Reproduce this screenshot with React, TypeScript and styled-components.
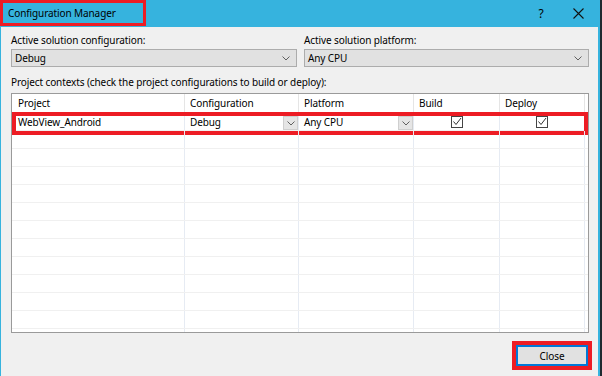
import React from "react";
import styled, { createGlobalStyle } from "styled-components";

const GlobalStyle = createGlobalStyle`
  html, body { margin: 0; padding: 0; background: #f0f0f0; }
  body {
    font-family: "Noto Sans", "Open Sans", sans-serif;
    font-size: 10px;
    letter-spacing: -0.1px;
    color: #000;
  }
  * { box-sizing: border-box; }
`;

const RED = "#ed1c24";

const Window = styled.div`
  width: 602px;
  height: 376px;
  background: #36b3de;
  border-right: 2px solid #1f2a30;
  display: flex;
  flex-direction: column;
  overflow: hidden;
`;

const TitleBar = styled.div`
  position: relative;
  height: 27px;
  flex: 0 0 27px;
  display: flex;
  align-items: center;
  padding-left: 8px;
  padding-right: 2px;
`;

const TitleText = styled.span`
  font-size: 10px;
  color: #000;
  flex: 1;
  line-height: 16px;
  margin-top: -1px;
`;

const TitleHighlight = styled.div`
  position: absolute;
  left: 0;
  top: 0;
  width: 146px;
  height: 26px;
  border: 3px solid ${RED};
  pointer-events: none;
`;

const CaptionButton = styled.div<{ $w: number }>`
  width: ${(p) => p.$w}px;
  height: 27px;
  display: flex;
  align-items: center;
  justify-content: center;
  font-size: 12px;
  color: #000;
`;

const Body = styled.div`
  flex: 1;
  margin: 0 2px 0 1px;
  background: #f0f0f0;
  padding: 6px 9px 0 10px;
  display: flex;
  flex-direction: column;
`;

const TopRow = styled.div`
  display: grid;
  grid-template-columns: 286px 285px;
  column-gap: 7px;
`;

const Field = styled.div`
  display: flex;
  flex-direction: column;
`;

const Label = styled.div`
  line-height: 14px;
  height: 14px;
  white-space: nowrap;
`;

const Combo = styled.div`
  margin-top: 2px;
  height: 18px;
  background: #e1e1e1;
  border: 1px solid #acacac;
  display: flex;
  align-items: center;
  padding-left: 3px;
  padding-right: 6px;
  justify-content: space-between;
`;

const ContextsLabel = styled(Label)`
  margin-top: 8px;
`;

const Grid = styled.div`
  margin-top: 4px;
  height: 240px;
  flex: 0 0 240px;
  background: #fff;
  border: 1px solid #9a9a9a;
  overflow: hidden;
`;

const COLS = "173px 114px 115px 86px 85px 1fr";

const HeaderRow = styled.div`
  display: grid;
  grid-template-columns: ${COLS};
  height: 19px;
  border-bottom: 1px solid #e5e5e5;
`;

const HeaderCell = styled.div<{ $last?: boolean }>`
  display: flex;
  align-items: center;
  padding-left: 5px;
  border-right: ${(p) => (p.$last ? "none" : "1px solid #e5e5e5")};
  &:first-child { padding-left: 6px; }
`;

const Row = styled.div<{ $highlight?: boolean }>`
  position: relative;
  display: grid;
  grid-template-columns: ${COLS};
  height: 18px;
  border-bottom: 1px solid #f0f0f0;
  ${(p) =>
    p.$highlight
      ? `&::after {
          content: "";
          position: absolute;
          left: 0;
          right: 0;
          top: -1px;
          bottom: -5px;
          border: 4px solid ${RED};
          pointer-events: none;
        }`
      : ""}
`;

const Cell = styled.div<{ $last?: boolean; $center?: boolean }>`
  display: flex;
  align-items: center;
  justify-content: ${(p) => (p.$center ? "center" : "flex-start")};
  padding-left: ${(p) => (p.$center ? 0 : 5)}px;
  border-right: ${(p) => (p.$last ? "none" : "1px solid #e6ebf3")};
  &:first-child { padding-left: 6px; }
`;

const ComboCell = styled(Cell)`
  justify-content: space-between;
  padding-right: 0;
`;

const CellDrop = styled.div`
  align-self: flex-end;
  width: 15px;
  height: 14px;
  background: #e5e5e5;
  border: 1px solid #cfcfcf;
  display: flex;
  align-items: center;
  justify-content: center;
`;

const CheckBox = styled.div`
  width: 12px;
  height: 12px;
  margin-top: 1px;
  border: 1px solid #444;
  background: #fff;
  display: flex;
  align-items: center;
  justify-content: center;
`;

const Footer = styled.div`
  display: flex;
  justify-content: flex-end;
  margin-top: 12px;
  padding-right: 1px;
`;

const Button = styled.div`
  width: 72px;
  height: 21px;
  background: #e1e1e1;
  border: 1px solid #0078d7;
  box-shadow: inset 0 0 0 1px #0078d7;
  outline: 4px solid ${RED};
  display: flex;
  align-items: center;
  justify-content: center;
`;

const Chevron = () => (
  <svg width="8" height="5" viewBox="0 0 8 5">
    <path d="M0.5 0.5 L4 4 L7.5 0.5" fill="none" stroke="#606060" strokeWidth="1" />
  </svg>
);

const Check = () => (
  <svg width="10" height="10" viewBox="0 0 10 10">
    <path d="M1.5 4.5 L4 7.5 L9 1" fill="none" stroke="#333" strokeWidth="1" />
  </svg>
);

const CloseIcon = () => (
  <svg width="11" height="11" viewBox="0 0 11 11">
    <path d="M0.5 0.5 L10.5 10.5 M10.5 0.5 L0.5 10.5" stroke="#111" strokeWidth="1.1" />
  </svg>
);

export default function App() {
  const emptyRows = Array.from({ length: 12 });
  return (
    <>
      <GlobalStyle />
      <Window>
        <TitleBar>
          <TitleText>Configuration Manager</TitleText>
          <CaptionButton $w={34}>?</CaptionButton>
          <CaptionButton $w={40}>
            <CloseIcon />
          </CaptionButton>
          <TitleHighlight />
        </TitleBar>
        <Body>
          <TopRow>
            <Field>
              <Label>Active solution configuration:</Label>
              <Combo>
                <span>Debug</span>
                <Chevron />
              </Combo>
            </Field>
            <Field>
              <Label>Active solution platform:</Label>
              <Combo>
                <span>Any CPU</span>
                <Chevron />
              </Combo>
            </Field>
          </TopRow>
          <ContextsLabel>
            Project contexts (check the project configurations to build or deploy):
          </ContextsLabel>
          <Grid>
            <HeaderRow>
              <HeaderCell>Project</HeaderCell>
              <HeaderCell>Configuration</HeaderCell>
              <HeaderCell>Platform</HeaderCell>
              <HeaderCell>Build</HeaderCell>
              <HeaderCell>Deploy</HeaderCell>
              <HeaderCell $last />
            </HeaderRow>
            <Row $highlight>
              <Cell>WebView_Android</Cell>
              <ComboCell>
                <span>Debug</span>
                <CellDrop>
                  <Chevron />
                </CellDrop>
              </ComboCell>
              <ComboCell>
                <span>Any CPU</span>
                <CellDrop>
                  <Chevron />
                </CellDrop>
              </ComboCell>
              <Cell $center>
                <CheckBox>
                  <Check />
                </CheckBox>
              </Cell>
              <Cell $center>
                <CheckBox>
                  <Check />
                </CheckBox>
              </Cell>
              <Cell $last />
            </Row>
            {emptyRows.map((_, i) => (
              <Row key={i}>
                <Cell />
                <Cell />
                <Cell />
                <Cell />
                <Cell />
                <Cell $last />
              </Row>
            ))}
          </Grid>
          <Footer>
            <Button>Close</Button>
          </Footer>
        </Body>
      </Window>
    </>
  );
}
